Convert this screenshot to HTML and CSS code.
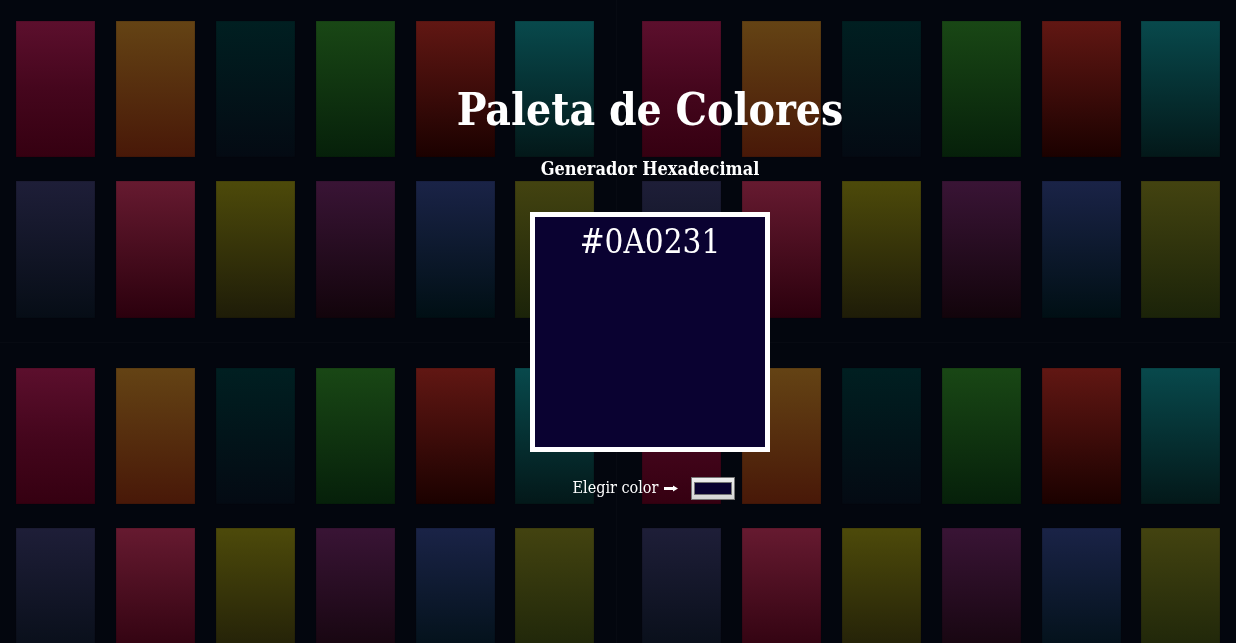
FILE: index.html
```html
<!DOCTYPE html>
<html lang="es">
<head>
<meta charset="utf-8">
<meta name="viewport" content="width=device-width, initial-scale=1">
<title>Paleta de Colores</title>
<link rel="stylesheet" href="styles.css">
</head>
<body>
<svg class="backdrop" aria-hidden="true">
  <defs>
    <linearGradient id="c1" x2="0" y2="1"><stop stop-color="#5c0f2d"/><stop offset=".5" stop-color="#45061d"/><stop offset="1" stop-color="#350011"/></linearGradient>
    <linearGradient id="c2" x2="0" y2="1"><stop stop-color="#644314"/><stop offset="1" stop-color="#481808"/></linearGradient>
    <linearGradient id="c3" x2="0" y2="1"><stop stop-color="#001f21"/><stop offset="1" stop-color="#040a13"/></linearGradient>
    <linearGradient id="c4" x2="0" y2="1"><stop stop-color="#194715"/><stop offset="1" stop-color="#06200a"/></linearGradient>
    <linearGradient id="c5" x2="0" y2="1"><stop stop-color="#611713"/><stop offset="1" stop-color="#1b0100"/></linearGradient>
    <linearGradient id="c6" x2="0" y2="1"><stop stop-color="#08494c"/><stop offset="1" stop-color="#031819"/></linearGradient>
    <linearGradient id="c7" x2="0" y2="1"><stop stop-color="#1e1e38"/><stop offset="1" stop-color="#060d16"/></linearGradient>
    <linearGradient id="c8" x2="0" y2="1"><stop stop-color="#661a30"/><stop offset="1" stop-color="#2b000d"/></linearGradient>
    <linearGradient id="c9" x2="0" y2="1"><stop stop-color="#4d4a0a"/><stop offset="1" stop-color="#1e1c08"/></linearGradient>
    <linearGradient id="c10" x2="0" y2="1"><stop stop-color="#391435"/><stop offset="1" stop-color="#12040b"/></linearGradient>
    <linearGradient id="c11" x2="0" y2="1"><stop stop-color="#1a2347"/><stop offset="1" stop-color="#000f14"/></linearGradient>
    <linearGradient id="c12" x2="0" y2="1"><stop stop-color="#434310"/><stop offset="1" stop-color="#1b2309"/></linearGradient>
    <pattern id="swatches" width="626" height="347" patternUnits="userSpaceOnUse">
      <rect width="626" height="347" fill="#03060e"/>
      <path d="M616.5 0V347M0 342.5H626" stroke="#070a12"/>
      <g stroke="#000" stroke-opacity=".2">
        <rect x="16" y="21" width="79" height="136" fill="url(#c1)"/>
        <rect x="116" y="21" width="79" height="136" fill="url(#c2)"/>
        <rect x="216" y="21" width="79" height="136" fill="url(#c3)"/>
        <rect x="316" y="21" width="79" height="136" fill="url(#c4)"/>
        <rect x="416" y="21" width="79" height="136" fill="url(#c5)"/>
        <rect x="515" y="21" width="79" height="136" fill="url(#c6)"/>
        <rect x="16" y="181" width="79" height="137" fill="url(#c7)"/>
        <rect x="116" y="181" width="79" height="137" fill="url(#c8)"/>
        <rect x="216" y="181" width="79" height="137" fill="url(#c9)"/>
        <rect x="316" y="181" width="79" height="137" fill="url(#c10)"/>
        <rect x="416" y="181" width="79" height="137" fill="url(#c11)"/>
        <rect x="515" y="181" width="79" height="137" fill="url(#c12)"/>
      </g>
    </pattern>
  </defs>
  <rect width="100%" height="100%" fill="url(#swatches)"/>
</svg>
<main class="generator">
  <h1 class="title">Paleta de Colores</h1>
  <h2 class="subtitle">Generador Hexadecimal</h2>
  <output class="preview" for="color">#0A0231</output>
  <div class="picker">
    <label class="picker-label" for="color">Elegir color
      <svg class="arrow" viewBox="0 0 14 8" aria-hidden="true"><path d="M0 3H9V1.500L14 4.500L9 7.500V6H0Z"/></svg>
    </label>
    <input class="picker-input" type="color" id="color" value="#0a0231">
  </div>
</main>
</body>
</html>
```
FILE: styles.css
```css
* {
  box-sizing: border-box;
}

body {
  margin: 0;
  min-height: 100vh;
  background: #03060e;
  color: #fff;
  font-family: "Roboto Slab", "DejaVu Serif Condensed", "DejaVu Serif", serif;
}

.backdrop {
  position: fixed;
  inset: 0;
  z-index: -1;
  width: 100%;
  height: 100%;
}

.generator {
  display: flex;
  flex-direction: column;
  align-items: center;
  padding: 78px 0 24px 64px;
}

.title {
  margin: 0;
  font-size: 44px;
  line-height: 64px;
}

.subtitle {
  margin: 15px 0 31px;
  font-size: 18px;
  line-height: 24px;
}

.preview {
  width: 240px;
  height: 240px;
  border: 5px solid #fff;
  background: #0a0231;
  font-size: 33px;
  line-height: 50px;
  text-align: center;
}

.picker {
  display: flex;
  align-items: center;
  gap: 13px;
  margin-top: 24px;
  padding-left: 8px;
}

.picker-label {
  display: flex;
  align-items: center;
  gap: 6px;
  font-size: 16px;
  line-height: 24px;
}

.arrow {
  width: 14px;
  height: 8px;
  fill: #fff;
}

.picker-input {
  appearance: none;
  width: 44px;
  height: 23px;
  padding: 4px 2px;
  border: 1px solid #767676;
  background: linear-gradient(#efefef, #d6d6d6);
}

.picker-input::-webkit-color-swatch-wrapper {
  padding: 0;
}

.picker-input::-webkit-color-swatch {
  border: 1px solid #777;
}
```
